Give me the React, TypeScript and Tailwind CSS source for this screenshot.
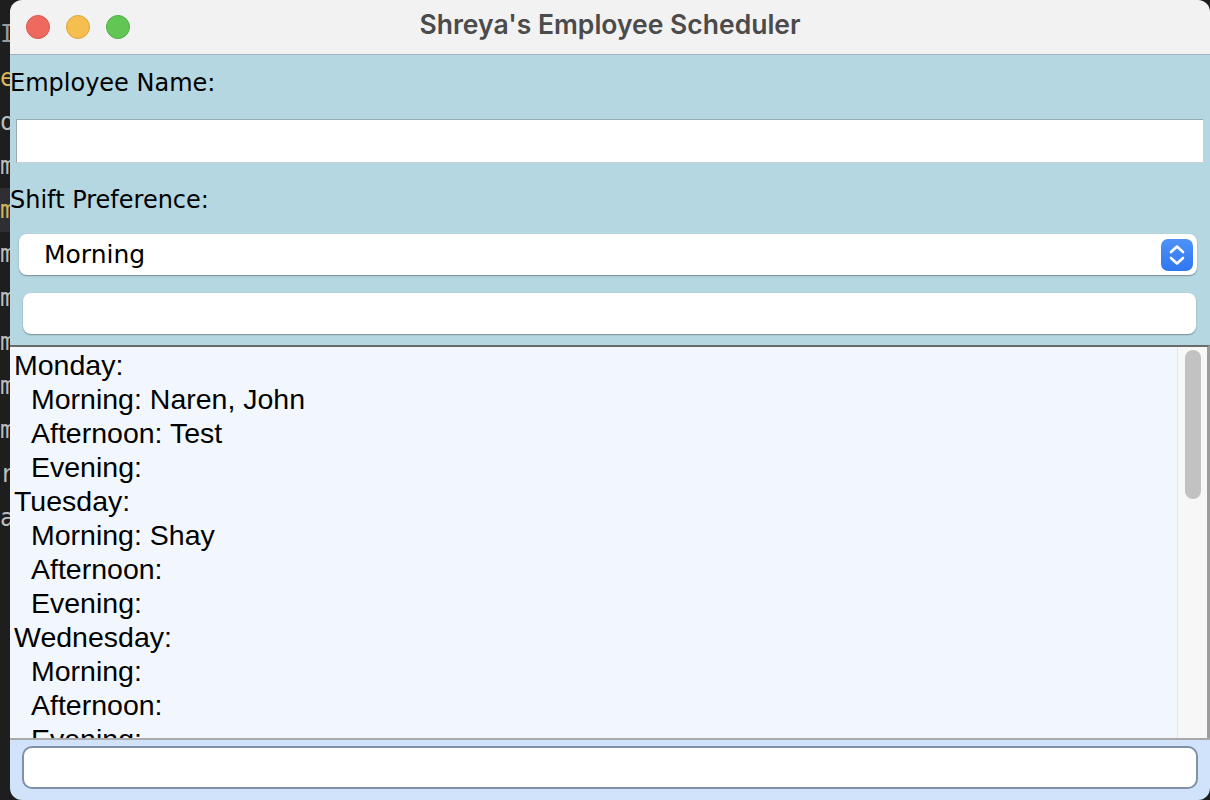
import React from 'react';

const sideRows = [
  { ch: 'Il', color: 'text-[#9a9a9a]', hl: false },
  { ch: 'ea', color: 'text-[#d6b656]', hl: false },
  { ch: 'or', color: 'text-[#bdbdbd]', hl: false },
  { ch: 'm', color: 'text-[#bdbdbd]', hl: false },
  { ch: 'm', color: 'text-[#d6b656]', hl: true },
  { ch: 'm', color: 'text-[#bdbdbd]', hl: false },
  { ch: 'm', color: 'text-[#bdbdbd]', hl: false },
  { ch: 'm', color: 'text-[#bdbdbd]', hl: false },
  { ch: 'm', color: 'text-[#bdbdbd]', hl: false },
  { ch: 'm', color: 'text-[#bdbdbd]', hl: false },
  { ch: 'r', color: 'text-[#bdbdbd]', hl: false },
  { ch: 'a', color: 'text-[#bdbdbd]', hl: false },
];

const schedule = [
  { day: 'Monday', shifts: ['Morning: Naren, John', 'Afternoon: Test', 'Evening:'] },
  { day: 'Tuesday', shifts: ['Morning: Shay', 'Afternoon:', 'Evening:'] },
  { day: 'Wednesday', shifts: ['Morning:', 'Afternoon:', 'Evening:'] },
  { day: 'Thursday', shifts: ['Morning:', 'Afternoon:', 'Evening:'] },
];

export default function App() {
  return (
    <div className="w-[1210px] h-[800px] bg-[#1e1e1e] flex overflow-hidden">
      {/* editor behind the window */}
      <div className="w-[10px] shrink-0 overflow-hidden pt-[12px] font-['DejaVu_Sans_Mono',monospace] text-[24px] leading-[44px]">
        {sideRows.map((r, i) => (
          <div key={i} className={`whitespace-nowrap ${r.color} ${r.hl ? 'bg-[#2f2f33]' : ''}`}>
            {r.ch}
          </div>
        ))}
      </div>

      {/* window */}
      <div className="flex-1 flex flex-col rounded-t-[12px] rounded-b-[12px] overflow-hidden">
        {/* title bar */}
        <div className="h-[55px] shrink-0 bg-[#f2f2f2] border-b border-[#9fb6c1] flex items-center relative">
          <div className="flex gap-[16px] pl-[16px]">
            <span className="w-[24px] h-[24px] rounded-full bg-[#ee6a5f] border border-[#d8574c]" />
            <span className="w-[24px] h-[24px] rounded-full bg-[#f5be4f] border border-[#dca53e]" />
            <span className="w-[24px] h-[24px] rounded-full bg-[#62c655] border border-[#50ad45]" />
          </div>
          <div className="absolute inset-0 flex items-center justify-center pb-[4px] font-['Inter',sans-serif] font-semibold text-[26.5px] text-[#4b4b4b]">
            Shreya's Employee Scheduler
          </div>
        </div>

        {/* form area */}
        <div className="bg-[#b4d7e2] flex flex-col h-[290px] shrink-0 font-['DejaVu_Sans',sans-serif] text-[24px] leading-[28px] text-black">
          <div className="h-[64px] pt-[14px]">Employee Name:</div>
          <div className="ml-[6px] mr-[7px] h-[44px] bg-white border-t border-l border-[#9aaab2] border-b border-b-[#c5d1d6]" />
          <div className="h-[71px] flex items-center pt-[2px]">Shift Preference:</div>
          <div className="ml-[9px] mr-[13px] h-[41px] bg-white rounded-[8px] shadow-[0_1px_1.5px_rgba(0,0,0,0.35)] flex items-center pl-[25px] pr-[4px]">
            <span className="flex-1 text-[25px]">Morning</span>
            <span className="w-[32px] h-[32px] rounded-[7px] bg-gradient-to-b from-[#4e92f7] to-[#2f76f1] flex items-center justify-center">
              <svg width="20" height="26" viewBox="0 0 20 26" fill="none" stroke="white" strokeWidth="2.6" strokeLinecap="round" strokeLinejoin="round">
                <path d="M4 10 L10 4.5 L16 10" />
                <path d="M4 16 L10 21.5 L16 16" />
              </svg>
            </span>
          </div>
          <div className="ml-[13px] mr-[14px] mt-[18px] h-[41px] bg-white rounded-[8px] shadow-[0_1px_1.5px_rgba(0,0,0,0.35)]" />
        </div>

        {/* schedule list */}
        <div className="h-[393px] shrink-0 border-t-2 border-[#6a6a6a] border-r-[3px] border-r-[#9c9c9c] bg-[#f2f7fe] flex overflow-hidden">
          <div className="flex-1 pl-[4px] pt-[1px] font-['Liberation_Sans',Arial,sans-serif] text-[28.5px] leading-[34px] text-black overflow-hidden">
            {schedule.map((d) => (
              <div key={d.day}>
                <div>{d.day}:</div>
                {d.shifts.map((s, i) => (
                  <div key={i} className="pl-[17px]">{s}</div>
                ))}
              </div>
            ))}
          </div>
          <div className="w-[30px] shrink-0 bg-[#f7f7f7] border-l border-[#e4e4e4] flex justify-center pt-[3px]">
            <div className="w-[16px] h-[149px] rounded-full bg-[#c2c2c2]" />
          </div>
        </div>

        {/* bottom field */}
        <div className="flex-1 bg-[#d0e3fa] border-t-2 border-[#a9a9a9] pt-[6px] pl-[12px] pr-[12px]">
          <div className="h-[43px] bg-white rounded-[10px] border-2 border-[#7e91a8]" />
        </div>
      </div>
    </div>
  );
}
